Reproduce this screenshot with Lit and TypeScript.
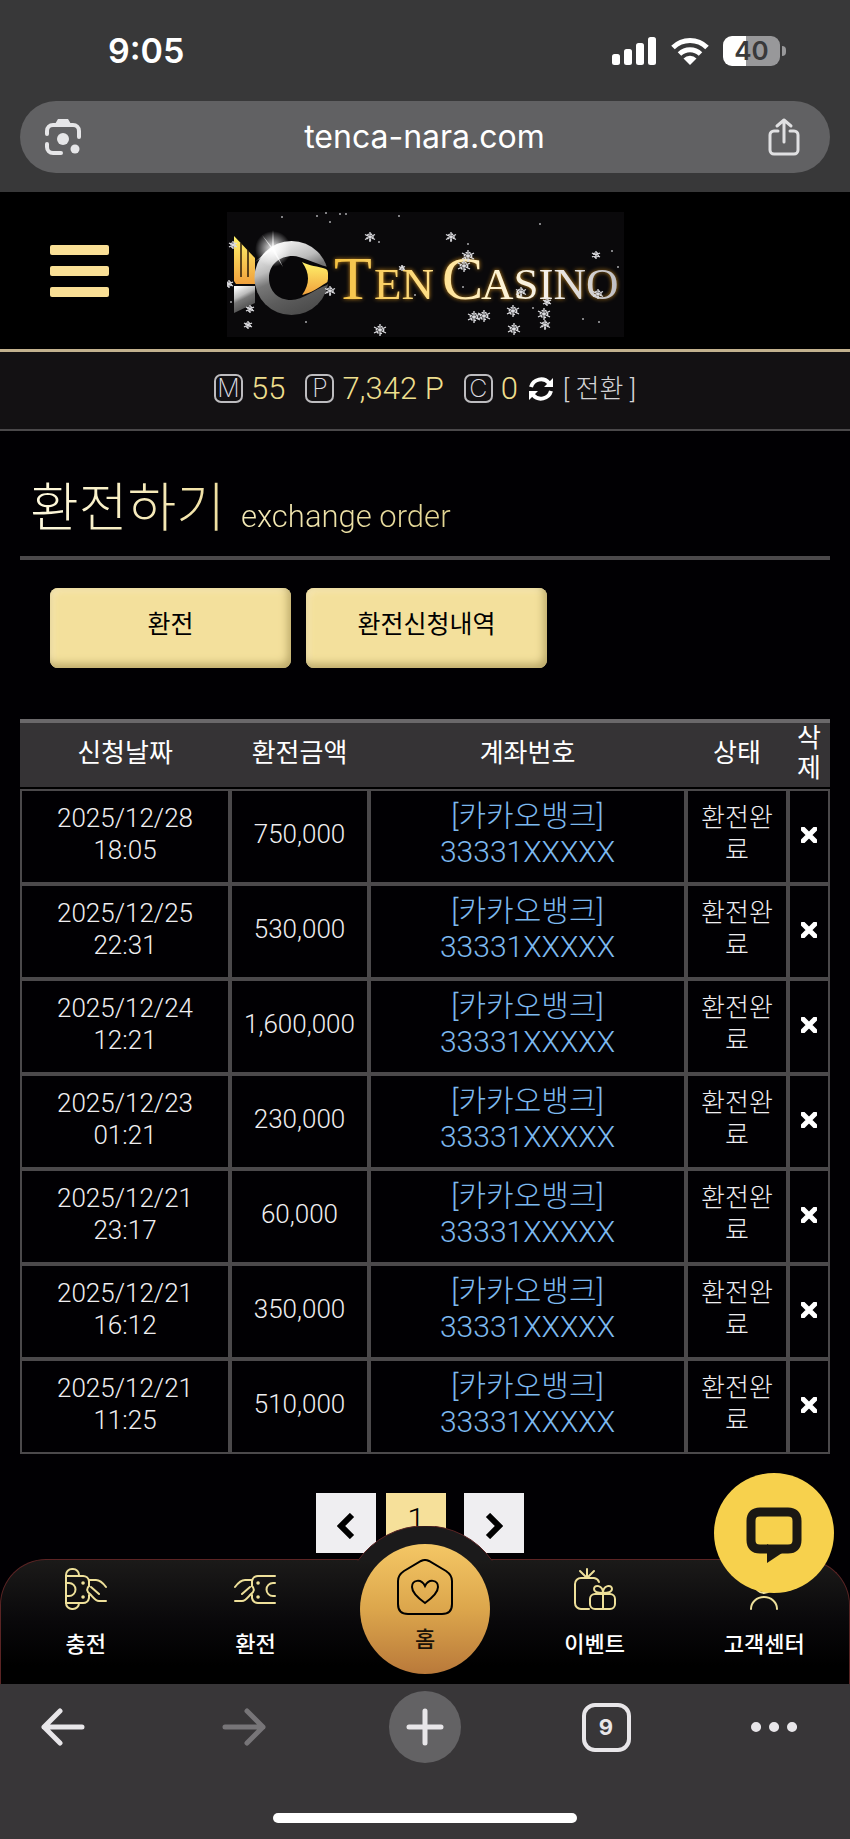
import { LitElement, html, css, svg } from "lit";
import { customElement } from "lit/decorators.js";

const orders = [
  { date: "2025/12/28", time: "18:05", amount: "750,000" },
  { date: "2025/12/25", time: "22:31", amount: "530,000" },
  { date: "2025/12/24", time: "12:21", amount: "1,600,000" },
  { date: "2025/12/23", time: "01:21", amount: "230,000" },
  { date: "2025/12/21", time: "23:17", amount: "60,000" },
  { date: "2025/12/21", time: "16:12", amount: "350,000" },
  { date: "2025/12/21", time: "11:25", amount: "510,000" },
];

// x, y, radius
const flakes = [
  [143, 25, 5], [224, 25, 5], [237, 54, 6], [241, 44, 6], [369, 43, 4],
  [6, 33, 4], [2, 72, 4], [103, 79, 5], [23, 97, 4], [21, 113, 4],
  [153, 118, 6], [247, 105, 6], [257, 104, 6], [286, 99, 6], [287, 117, 6],
  [317, 102, 6], [318, 113, 5], [320, 90, 4], [294, 80, 5], [371, 82, 5],
  [175, 56, 3],
];

const dots = [
  [55, 5], [90, 4], [99, 1], [113, 2], [119, 2], [103, 10], [172, 4], [152, 30],
  [313, 12], [241, 32], [79, 110], [236, 75], [188, 83], [372, 110], [306, 96],
  [356, 107], [385, 39], [391, 55], [4, 90],
];

@customElement("status-bar")
export class StatusBar extends LitElement {
  static styles = css`
    :host {
      display: flex;
      align-items: center;
      justify-content: space-between;
      box-sizing: border-box;
      height: 101px;
      padding: 0 64px 0 108px;
      color: #fff;
      font: 600 34px/40px Inter, sans-serif;
    }

    .icons {
      display: flex;
      align-items: center;
      gap: 14px;
    }

    .battery {
      display: flex;
      align-items: center;
      gap: 2px;
    }

    .level {
      width: 57px;
      border-radius: 9px;
      background: linear-gradient(90deg, #fff 40%, #98989a 40%);
      color: #39393a;
      font-size: 26px;
      line-height: 30px;
      text-align: center;
    }

    .nub {
      width: 4px;
      height: 10px;
      border-radius: 0 4px 4px 0;
      background: #98989a;
    }
  `;

  render() {
    return html`
      <span>9:05</span>
      <div class="icons">
        <svg width="45" height="28" viewBox="0 0 45 28" fill="#fff">
          <rect x="0" y="17" width="8" height="11" rx="2.5" />
          <rect x="12" y="12" width="8" height="16" rx="2.5" />
          <rect x="24" y="6" width="8" height="22" rx="2.5" />
          <rect x="36" y="0" width="8" height="28" rx="2.5" />
        </svg>
        <svg width="38" height="28" viewBox="0 0 38 28">
          <g fill="none" stroke="#fff" stroke-width="5">
            <path d="M2 10.500a24 24 0 0 1 34 0" />
            <path d="M8.500 17a15 15 0 0 1 21 0" />
          </g>
          <path d="M19 28l-6.500-6.500a9 9 0 0 1 13 0z" fill="#fff" />
        </svg>
        <div class="battery">
          <span class="level">40</span>
          <span class="nub"></span>
        </div>
      </div>
    `;
  }
}

@customElement("address-bar")
export class AddressBar extends LitElement {
  static styles = css`
    :host {
      display: flex;
      align-items: center;
      justify-content: space-between;
      height: 72px;
      margin: 0 20px 19px;
      padding: 0 30px 0 25px;
      border-radius: 36px;
      background: #616163;
    }

    button {
      display: flex;
      padding: 0;
      border: 0;
      background: none;
    }

    a {
      color: #fff;
      font: 400 32px/40px Inter, sans-serif;
      text-decoration: none;
    }
  `;

  render() {
    return html`
      <button aria-label="렌즈">
        <svg width="36" height="38" viewBox="0 0 36 38">
          <g fill="none" stroke="#e6e6e8" stroke-width="4" stroke-linecap="round">
            <path d="M2 16v-3a6 6 0 0 1 6-6h20a6 6 0 0 1 6 6v6" />
            <path d="M2 26v3a6 6 0 0 0 6 6h8" />
          </g>
          <path d="M10 6l3-5h10l3 5z" fill="#e6e6e8" />
          <circle cx="18" cy="21" r="6" fill="#e6e6e8" />
          <circle cx="30" cy="31" r="4.500" fill="#e6e6e8" />
        </svg>
      </button>
      <a href="#">tenca-nara.com</a>
      <button aria-label="공유">
        <svg width="32" height="38" viewBox="0 0 32 38" fill="none" stroke="#e0e0e2"
          stroke-width="3" stroke-linecap="round" stroke-linejoin="round">
          <path d="M10 13H6a4 4 0 0 0-4 4v15a4 4 0 0 0 4 4h20a4 4 0 0 0 4-4V17a4 4 0 0 0-4-4h-4" />
          <path d="M16 24V2M9 8l7-6 7 6" />
        </svg>
      </button>
    `;
  }
}

@customElement("casino-logo")
export class CasinoLogo extends LitElement {
  static styles = css`
    svg {
      display: block;
    }

    .name {
      font-family: "Liberation Serif", serif;
      filter: drop-shadow(0 0 2px #c98a1d);
    }

    .small {
      font-size: 45px;
    }

    .large {
      font-size: 62px;
    }
  `;

  render() {
    return html`
      <svg width="397" height="125" viewBox="0 0 397 125" role="img" aria-label="Ten Casino">
        <defs>
          <linearGradient id="gold" x1="0" y1="0" x2="0" y2="1">
            <stop offset="0" stop-color="#fff36b" />
            <stop offset="1" stop-color="#f0a03c" />
          </linearGradient>
          <linearGradient id="silver" x1="0.200" y1="0" x2="0.600" y2="1">
            <stop offset="0" stop-color="#fff" />
            <stop offset="0.350" stop-color="#bcbcbc" />
            <stop offset="0.500" stop-color="#777" />
            <stop offset="0.750" stop-color="#5c5c5c" />
            <stop offset="1" stop-color="#4c4c4c" />
          </linearGradient>
          <linearGradient id="word" gradientUnits="userSpaceOnUse" x1="109" y1="0" x2="392" y2="0">
            <stop offset="0" stop-color="#f5c243" />
            <stop offset="0.350" stop-color="#ffe08a" />
            <stop offset="0.550" stop-color="#fff3cf" />
            <stop offset="0.750" stop-color="#f4f0ea" />
            <stop offset="1" stop-color="#bdbdc2" />
          </linearGradient>
          <radialGradient id="shine">
            <stop offset="0" stop-color="#fff" />
            <stop offset="0.300" stop-color="#fff" stop-opacity="0.700" />
            <stop offset="1" stop-color="#fff" stop-opacity="0" />
          </radialGradient>
        </defs>
        <rect width="397" height="125" fill="#0a090b" />
        <path d="M7 24l21 22v26H9l-2-3z" fill="url(#gold)" />
        <path d="M14 31v34M21 38v27" stroke="#2a1a08" stroke-width="1.500" />
        <path d="M7 74h21v17L7 101z" fill="url(#silver)" />
        <circle cx="64.500" cy="66" r="37" fill="url(#silver)" />
        <path d="M42 66c0-13 10-22 24-22 8 0 20 7 35 11l2 4v10l-3 4c-12 4-24 15-36 15-13 0-22-9-22-22z"
          fill="#080709" />
        <path d="M75 50c7 4 16 4 24 7q2 1 2 4v6q0 3-2 4c-8 5-15 10-24 12 8-11 8-22 0-33z" fill="url(#gold)" />
        <circle cx="46" cy="37" r="18" fill="url(#shine)" />
        <path d="M46 18l1 18 9 19-11-17-17 12 16-14-9-13 10 12z" fill="#fff" opacity="0.700" />
        <text class="name" y="87" fill="url(#word)">
          <tspan class="large" x="107">T</tspan><tspan class="small" x="147">EN</tspan>
          <tspan class="large" x="215">C</tspan><tspan class="small" x="254">ASINO</tspan>
        </text>
        ${flakes.map(
          ([x, y, r]) => svg`
            <g transform="translate(${x} ${y})" stroke="#dcdce0">
              <path stroke-width="1.300" d="M0 ${-r}V${r}M${-r} ${-r / 2}L${r} ${r / 2}M${-r} ${r / 2}L${r} ${-r / 2}" />
              <circle r="${r * 0.6}" fill="none" stroke-width="1.500" stroke-dasharray="2 1.500" />
            </g>
          `
        )}
        ${dots.map(([x, y]) => svg`<circle cx="${x}" cy="${y}" r="1" fill="#a8a8ac" />`)}
      </svg>
    `;
  }
}

@customElement("site-header")
export class SiteHeader extends LitElement {
  static styles = css`
    :host {
      display: block;
      background: #000;
    }

    .top {
      display: grid;
      grid-template-columns: 1fr auto 1fr;
      align-items: center;
      height: 157px;
      padding: 0 50px;
      border-bottom: 3px solid #c2b18e;
    }

    .top casino-logo {
      padding-top: 8px;
    }

    .menu {
      display: flex;
      flex-direction: column;
      gap: 11px;
      width: 59px;
      padding: 0;
      border: 0;
      background: none;
    }

    .menu span {
      height: 10px;
      border-radius: 2px;
      background: #f9df95;
    }

    .wallet {
      display: flex;
      align-items: center;
      justify-content: center;
      box-sizing: border-box;
      height: 79px;
      padding-bottom: 4px;
      border-bottom: 2px solid #4a484a;
      background: #131113;
      color: #eedf8e;
      font: 300 31px/32px Roboto, "Noto Sans CJK KR", sans-serif;
    }

    .tag {
      width: 25px;
      margin-right: 8px;
      border: 2px solid #bdbcbf;
      border-radius: 7px;
      color: #dddce0;
      font: 200 25px/25px Inter, sans-serif;
      text-align: center;
    }

    .value {
      margin-right: 20px;
    }

    .value.last {
      margin-right: 10px;
    }

    .wallet button {
      display: flex;
      padding: 0;
      border: 0;
      background: none;
    }

    .wallet .convert {
      margin-left: 9px;
      color: #d5d4d7;
      font: 300 26px/32px Roboto, "Noto Sans CJK KR", sans-serif;
    }
  `;

  render() {
    return html`
      <div class="top">
        <button class="menu" aria-label="메뉴"><span></span><span></span><span></span></button>
        <casino-logo></casino-logo>
      </div>
      <div class="wallet">
        <span class="tag">M</span><span class="value">55</span>
        <span class="tag">P</span><span class="value">7,342 P</span>
        <span class="tag">C</span><span class="value last">0</span>
        <button aria-label="새로고침">
          <svg width="26" height="26" viewBox="0 0 26 26">
            <g fill="none" stroke="#fff" stroke-width="4">
              <path d="M3 11a10.500 10.500 0 0 1 18-4" />
              <path d="M23 15a10.500 10.500 0 0 1-18 4" />
            </g>
            <path d="M25 2v9h-9zM1 24v-9h9z" fill="#fff" />
          </svg>
        </button>
        <button class="convert">[ 전환 ]</button>
      </div>
    `;
  }
}

@customElement("exchange-page")
export class ExchangePage extends LitElement {
  static styles = css`
    :host {
      display: block;
      padding: 38px 20px 6px;
      font: 300 26px/32px Roboto, "Noto Sans CJK KR", sans-serif;
      color: #efeef0;
    }

    .title {
      display: flex;
      align-items: baseline;
      gap: 16px;
      padding: 0 10px 7px;
      border-bottom: 4px solid #4b494b;
    }

    h1,
    .title p {
      margin: 0;
      background: linear-gradient(90deg, #fffae0, #f0dfa0);
      background-clip: text;
      -webkit-background-clip: text;
      color: transparent;
    }

    h1 {
      font-size: 53px;
      font-weight: 300;
      line-height: 80px;
    }

    .title p {
      background-image: linear-gradient(90deg, #f6ebb9, #e3d592);
      font-size: 31px;
    }

    .tabs {
      display: flex;
      gap: 15px;
      padding: 28px 30px 51px;
    }

    .tabs button {
      width: 241px;
      height: 80px;
      padding: 0 0 7px;
      border: 0;
      border-radius: 8px;
      background: #f3e09c;
      box-shadow: inset -3px -4px 8px #b9a768, inset 3px 3px 6px #f8e9b6;
      color: #000;
      font: 400 25px/32px Roboto, "Noto Sans CJK KR", sans-serif;
    }

    table {
      width: 100%;
      border-top: 4px solid #6a686a;
      border-spacing: 0;
      table-layout: fixed;
      text-align: center;
    }

    .date {
      width: 210px;
    }

    .amount {
      width: 139px;
    }

    .status {
      width: 102px;
    }

    .remove {
      width: 42px;
    }

    th {
      box-sizing: border-box;
      height: 66px;
      padding: 0 0 4px;
      border-bottom: 2px solid #000;
      background: #353335;
      background-clip: padding-box;
      color: #fff;
      font-weight: 400;
      line-height: 30px;
      word-break: break-all;
    }

    td {
      box-sizing: border-box;
      height: 95px;
      padding: 0 0 6px;
      border: 2px solid #4b494b;
    }

    td.state {
      padding: 0 10px 6px;
      word-break: break-all;
    }

    td a {
      color: #7db9ef;
      font-size: 30px;
      line-height: 36px;
      text-decoration: none;
    }

    td button {
      padding: 0;
      border: 0;
      background: none;
    }

    .pages {
      display: flex;
      justify-content: center;
      gap: 10px;
      padding: 39px 10px 0 0;
    }

    .pages button {
      display: flex;
      align-items: center;
      justify-content: center;
      width: 60px;
      height: 60px;
      padding: 6px 0 0;
      border: 0;
      background: #efeef1;
      color: #000;
      font: 300 32px/32px Roboto, "Noto Sans CJK KR", sans-serif;
    }

    .pages .current {
      align-items: flex-start;
      margin-right: 8px;
      padding-top: 10px;
      background: #f6e09a;
    }
  `;

  render() {
    return html`
      <header class="title">
        <h1>환전하기</h1>
        <p>exchange order</p>
      </header>
      <div class="tabs">
        <button>환전</button>
        <button>환전신청내역</button>
      </div>
      <table>
        <thead>
          <tr>
            <th class="date">신청날짜</th>
            <th class="amount">환전금액</th>
            <th>계좌번호</th>
            <th class="status">상태</th>
            <th class="remove">삭제</th>
          </tr>
        </thead>
        <tbody>
          ${orders.map(
            (order) => html`
              <tr>
                <td>${order.date}<br />${order.time}</td>
                <td>${order.amount}</td>
                <td><a href="#">[카카오뱅크]<br />33331XXXXX</a></td>
                <td class="state">환전완료</td>
                <td>
                  <button aria-label="삭제">
                    <svg width="16" height="16" viewBox="0 0 16 16" stroke="#fff" stroke-width="5">
                      <path d="M2 2l12 12M14 2L2 14" stroke-linecap="round" />
                    </svg>
                  </button>
                </td>
              </tr>
            `
          )}
        </tbody>
      </table>
      <div class="pages">
        <button aria-label="이전">
          <svg width="18" height="26" viewBox="0 0 18 26" fill="none" stroke="#000" stroke-width="6">
            <path d="M15 2L4 13l11 11" />
          </svg>
        </button>
        <button class="current">1</button>
        <button aria-label="다음">
          <svg width="18" height="26" viewBox="0 0 18 26" fill="none" stroke="#000" stroke-width="6">
            <path d="M3 2l11 11L3 24" />
          </svg>
        </button>
      </div>
    `;
  }
}

@customElement("quick-menu")
export class QuickMenu extends LitElement {
  static styles = css`
    :host {
      display: block;
      position: relative;
    }

    nav {
      display: grid;
      grid-template-columns: repeat(5, 1fr);
      box-sizing: border-box;
      height: 125px;
      border: 1px solid #5b2424;
      border-bottom: 0;
      border-radius: 46px 46px 0 0;
      background: linear-gradient(#1b1a19, #09080a 50%, #000 85%);
    }

    a {
      display: flex;
      flex-direction: column;
      align-items: center;
      gap: 16px;
      padding-top: 8px;
      color: #fff;
      font: 500 22px/32px "Noto Sans CJK KR", sans-serif;
      text-decoration: none;
    }

    a svg {
      fill: none;
      stroke: #eee09a;
      stroke-width: 2;
      stroke-linecap: round;
    }

    .bump {
      position: absolute;
      left: 50%;
      top: -33px;
      margin-left: -83px;
    }

    .home {
      position: absolute;
      left: 50%;
      top: -15px;
      box-sizing: border-box;
      width: 130px;
      height: 130px;
      margin-left: -65px;
      padding-top: 15px;
      gap: 6px;
      border-radius: 50%;
      background: linear-gradient(#f4c765, #dca64c 50%, #b9793a);
      color: #1a1208;
    }

    .home svg {
      stroke: #000;
    }

    .chat {
      position: absolute;
      right: 16px;
      top: -86px;
      display: flex;
      align-items: center;
      justify-content: center;
      width: 120px;
      height: 120px;
      padding: 4px 0 0;
      border: 0;
      border-radius: 50%;
      background: #f7d14d;
    }
  `;

  render() {
    return html`
      <nav>
        <a href="#">
          <svg width="42" height="42" viewBox="0 0 42 42">
            <path d="M1 35V7a6 6 0 0 1 6-6h1a6 6 0 0 1 6 6v1M1 35a6 6 0 0 0 6 6h1a6 6 0 0 0 6-6" />
            <path d="M1 8h17a6 6 0 0 1 6 5v5M1 35h17a6 6 0 0 0 6-5v-3M1 15h3a6.500 6.500 0 0 1 0 13H1" />
            <path d="M24 12h7c4 0 7 3 10 7M41 33h-7c-4 0-6-4-9-7-3-2-4-5-1-8M26 19l8 7" />
            <path d="M18 15h.1M18 29h.1" stroke-width="3.500" />
          </svg>
          충전
        </a>
        <a href="#">
          <svg width="42" height="42" viewBox="0 0 42 42">
            <path d="M41 8H24a6 6 0 0 0-6 5v5M41 35H24a6 6 0 0 1-6-5v-3M41 15h-2a6.500 6.500 0 0 0 0 13h2" />
            <path d="M18 12h-7c-4 0-7 3-10 7M1 33h7c4 0 6-4 9-7 3-2 4-5 1-8M16 19l-8 7" />
            <path d="M24 15h.1M24 29h.1" stroke-width="3.500" />
          </svg>
          환전
        </a>
        <span></span>
        <a href="#">
          <svg width="42" height="42" viewBox="0 0 42 42">
            <path d="M15 41H7a6 6 0 0 1-6-6V16a6 6 0 0 1 6-6h13a6 6 0 0 1 5 4" />
            <path d="M13 9V1M12 9L6 3M14 9l6-6" />
            <rect x="16" y="26" width="25" height="15" rx="5" />
            <path d="M29 41V25q-9 0-9-4c0-5 9-4 9 4 0-8 9-9 9-4q0 4-9 4" />
          </svg>
          이벤트
        </a>
        <a href="#">
          <svg width="42" height="42" viewBox="0 0 42 42">
            <circle cx="21" cy="16" r="9" />
            <path d="M8 41a13 12 0 0 1 26 0" />
          </svg>
          고객센터
        </a>
      </nav>
      <svg class="bump" width="166" height="35" viewBox="0 0 166 35">
        <path d="M16 34.500A82 82 0 0 1 150 34.500" fill="#1b1a1b" stroke="#5b2424" />
      </svg>
      <a class="home" href="#">
        <svg width="56" height="56" viewBox="0 0 56 56">
          <path d="M24 2q4-2 8 0l17 10q6 4 6 10v23q0 10-10 10H11Q1 55 1 45V22q0-6 6-10z" />
          <path d="M28 44c-7-5-13-11-13-16 0-7 9-9 13-1 4-8 13-6 13 1 0 5-6 11-13 16z" />
        </svg>
        홈
      </a>
      <button class="chat" aria-label="채팅">
        <svg width="56" height="56" viewBox="0 0 56 56">
          <path d="M14 5h28q9 0 9 9v19q0 9-9 9H14q-9 0-9-9V14q0-9 9-9z"
            fill="none" stroke="#1b1813" stroke-width="9" />
          <path d="M21 37v19l15-10z" fill="#1b1813" />
        </svg>
      </button>
    `;
  }
}

@customElement("browser-toolbar")
export class BrowserToolbar extends LitElement {
  static styles = css`
    :host {
      display: flex;
      flex-direction: column;
      align-items: center;
      justify-content: space-between;
      box-sizing: border-box;
      height: 155px;
      padding: 7px 27px 16px;
      background: #383638;
    }

    .buttons {
      display: flex;
      align-items: center;
      justify-content: space-between;
      align-self: stretch;
    }

    button {
      display: flex;
      align-items: center;
      justify-content: center;
      width: 72px;
      height: 72px;
      padding: 0;
      border: 0;
      border-radius: 50%;
      background: none;
      fill: none;
      stroke: #e8e6e9;
      stroke-width: 5;
      stroke-linecap: round;
      stroke-linejoin: round;
    }

    .forward {
      stroke: #777578;
    }

    .new {
      background: #636264;
    }

    .tabs {
      box-sizing: border-box;
      width: 49px;
      border: 4px solid #e8e6e9;
      border-radius: 13px;
      color: #e8e6e9;
      font: 700 22px/41px Inter, sans-serif;
    }

    .more {
      justify-content: flex-start;
    }

    .indicator {
      width: 304px;
      height: 10px;
      border-radius: 5px;
      background: #fff;
    }
  `;

  render() {
    return html`
      <div class="buttons">
        <button aria-label="뒤로">
          <svg width="44" height="38" viewBox="0 0 44 38"><path d="M41 19H3M19 3L3 19l16 16" /></svg>
        </button>
        <button class="forward" aria-label="앞으로">
          <svg width="44" height="38" viewBox="0 0 44 38"><path d="M3 19h38M25 3l16 16-16 16" /></svg>
        </button>
        <button class="new" aria-label="새 탭">
          <svg width="38" height="38" viewBox="0 0 38 38"><path d="M19 3v32M3 19h32" /></svg>
        </button>
        <button aria-label="탭 목록"><span class="tabs">9</span></button>
        <button class="more" aria-label="더보기">
          <svg width="46" height="10" viewBox="0 0 46 10">
            <path d="M5 5h.1M23 5h.1M41 5h.1" stroke-width="10" />
          </svg>
        </button>
      </div>
      <div class="indicator"></div>
    `;
  }
}

@customElement("app-root")
export class AppRoot extends LitElement {
  static styles = css`
    :host {
      display: flex;
      flex-direction: column;
      min-height: 100vh;
      background: #010003;
    }

    .browser {
      display: flow-root;
      background: #383839;
    }

    exchange-page {
      flex: 1;
    }
  `;

  render() {
    return html`
      <div class="browser">
        <status-bar></status-bar>
        <address-bar></address-bar>
      </div>
      <site-header></site-header>
      <exchange-page></exchange-page>
      <quick-menu></quick-menu>
      <browser-toolbar></browser-toolbar>
    `;
  }
}
